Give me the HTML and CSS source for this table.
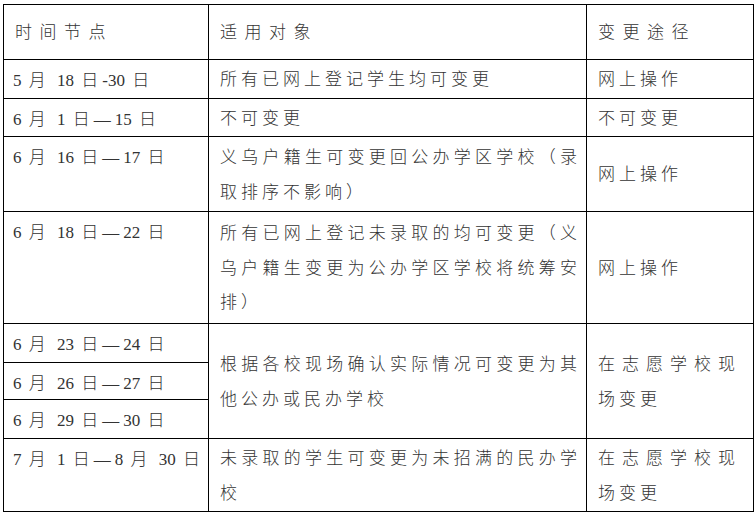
FILE: index.html
```html
<!DOCTYPE html>
<html lang="zh-CN">
<head>
<meta charset="utf-8">
<title>变更时间表</title>
<link rel="stylesheet" href="styles.css">
</head>
<body>
<table class="grid">
  <colgroup>
    <col class="c-date">
    <col class="c-who">
    <col class="c-how">
  </colgroup>
  <thead>
    <tr class="r-head">
      <th>时间节点</th>
      <th>适用对象</th>
      <th>变更途径</th>
    </tr>
  </thead>
  <tbody>
    <tr class="r-1">
      <td class="date"><span class="n">5</span> 月 <span class="n">18</span> 日<span class="n">-30</span> 日</td>
      <td class="who">所有已网上登记学生均可变更</td>
      <td class="how">网上操作</td>
    </tr>
    <tr class="r-2">
      <td class="date"><span class="n">6</span> 月 <span class="n">1</span> 日—<span class="n">15</span> 日</td>
      <td class="who">不可变更</td>
      <td class="how">不可变更</td>
    </tr>
    <tr class="r-3">
      <td class="date"><span class="n">6</span> 月 <span class="n">16</span> 日—<span class="n">17</span> 日</td>
      <td class="who">义乌户籍生可变更回公办学区学校（录取排序不影响）</td>
      <td class="how">网上操作</td>
    </tr>
    <tr class="r-4">
      <td class="date"><span class="n">6</span> 月 <span class="n">18</span> 日—<span class="n">22</span> 日</td>
      <td class="who">所有已网上登记未录取的均可变更（义乌户籍生变更为公办学区学校将统筹安排）</td>
      <td class="how">网上操作</td>
    </tr>
    <tr class="r-5">
      <td class="date"><span class="n">6</span> 月 <span class="n">23</span> 日—<span class="n">24</span> 日</td>
      <td class="who" rowspan="3">根据各校现场确认实际情况可变更为其他公办或民办学校</td>
      <td class="how" rowspan="3">在志愿学校现场变更</td>
    </tr>
    <tr class="r-6">
      <td class="date"><span class="n">6</span> 月 <span class="n">26</span> 日—<span class="n">27</span> 日</td>
    </tr>
    <tr class="r-7">
      <td class="date"><span class="n">6</span> 月 <span class="n">29</span> 日—<span class="n">30</span> 日</td>
    </tr>
    <tr class="r-8">
      <td class="date"><span class="n">7</span> 月 <span class="n">1</span> 日—<span class="n">8</span> 月 <span class="n">30</span> 日</td>
      <td class="who">未录取的学生可变更为未招满的民办学校</td>
      <td class="how">在志愿学校现场变更</td>
    </tr>
  </tbody>
</table>
</body>
</html>
```
FILE: styles.css
```css
html, body {
  margin: 0;
  background: #fff;
}

body {
  padding: 4px 0 0 3px;
  font-family: "Liberation Serif", "Noto Sans CJK SC", serif;
  font-size: 17px;
  color: #333;
}

.grid {
  border-collapse: collapse;
  table-layout: fixed;
  width: 750px;
}

.c-date { width: 205px; }
.c-who  { width: 378px; }
.c-how  { width: 167px; }

.grid th,
.grid td {
  border: 1px solid #000;
  padding: 3px 5px 0 11px;
  line-height: 34.5px;
  letter-spacing: 4px;
  font-weight: 300;
  text-align: left;
  vertical-align: middle;
}

.grid th {
  letter-spacing: 7.5px;
}

.grid td.date {
  vertical-align: top;
  padding-top: 5px;
  padding-left: 9px;
  line-height: 31px;
  white-space: nowrap;
  word-spacing: -1px;
}

.grid td.who {
  text-align: justify;
}

.grid td.how {
  padding-right: 14px;
  text-align: justify;
}

.n {
  letter-spacing: 0;
  word-spacing: 0;
}

.r-head { height: 55px; }
.r-1 { height: 38px; }
.r-2 { height: 38px; }
.r-3 { height: 75px; }
.r-4 { height: 112px; }
.r-5 { height: 39px; }
.r-6 { height: 37px; }
.r-7 { height: 39px; }
.r-8 { height: 73px; }
```
